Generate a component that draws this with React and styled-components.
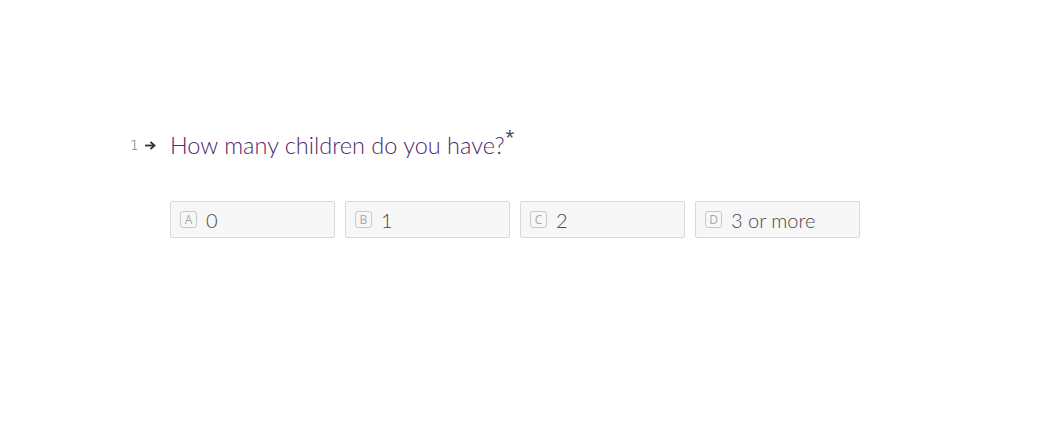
import styled, { createGlobalStyle } from "styled-components";

const GlobalStyle = createGlobalStyle`
  html, body {
    margin: 0;
    padding: 0;
    background: #fff;
  }
  body {
    font-family: Lato, "Open Sans", sans-serif;
  }
`;

const Page = styled.div`
  width: 1055px;
  height: 435px;
  box-sizing: border-box;
  padding: 130px 0 0 130px;
`;

const QuestionRow = styled.div`
  display: flex;
  align-items: flex-start;
`;

const Counter = styled.div`
  display: flex;
  align-items: center;
  gap: 6px;
  width: 40px;
  height: 30px;
  font-size: 14px;
  color: #666;
  font-family: "DejaVu Sans", sans-serif;
  font-weight: 300;
`;

const Title = styled.h1`
  margin: 0;
  font-size: 23.5px;
  line-height: 30px;
  font-weight: 300;
  color: #4e2a6c;
`;

const Star = styled.span`
  display: inline-block;
  font-size: 22px;
  line-height: 0;
  vertical-align: top;
  position: relative;
  top: 8px;
  margin-left: 1px;
  color: #4a4a5a;
  font-family: "Liberation Sans", sans-serif;
  font-weight: 400;
`;

const Choices = styled.div`
  display: flex;
  gap: 10px;
  margin: 41px 0 0 40px;
`;

const Choice = styled.button`
  display: flex;
  align-items: center;
  gap: 9px;
  width: 165px;
  height: 37px;
  box-sizing: border-box;
  padding: 0 9px;
  background: #f7f7f7;
  border: 1px solid #d9d9d9;
  border-radius: 2px;
  font-family: Lato, sans-serif;
  font-weight: 300;
  font-size: 20px;
  color: ${(p) => p.$color || "#4a4a4a"};
  cursor: pointer;
`;

const Key = styled.span`
  display: inline-flex;
  align-items: center;
  justify-content: center;
  width: 17px;
  height: 17px;
  box-sizing: border-box;
  border: 1px solid #c8c8c8;
  border-radius: 3px;
  font-size: 12px;
  font-weight: 400;
  color: #a8a8a8;
  font-family: "Open Sans", sans-serif;
`;

const Arrow = () => (
  <svg width="11" height="9" viewBox="0 0 11 9">
    <path d="M0 4.5h8" stroke="#333" strokeWidth="1.8" />
    <path d="M5.5 1 9.5 4.5 5.5 8" fill="none" stroke="#333" strokeWidth="1.8" />
  </svg>
);

const options = [
  { key: "A", label: "0" },
  { key: "B", label: "1", color: "#5a3a3a" },
  { key: "C", label: "2" },
  { key: "D", label: "3 or more" },
];

const App = () => {
  return (
    <Page>
      <GlobalStyle />
      <QuestionRow>
        <Counter>
          <span>1</span>
          <Arrow />
        </Counter>
        <Title>
          How many children do you have?<Star>*</Star>
        </Title>
      </QuestionRow>
      <Choices>
        {options.map((o) => (
          <Choice key={o.key} $color={o.color}>
            <Key>{o.key}</Key>
            {o.label}
          </Choice>
        ))}
      </Choices>
    </Page>
  );
};

export default App;
